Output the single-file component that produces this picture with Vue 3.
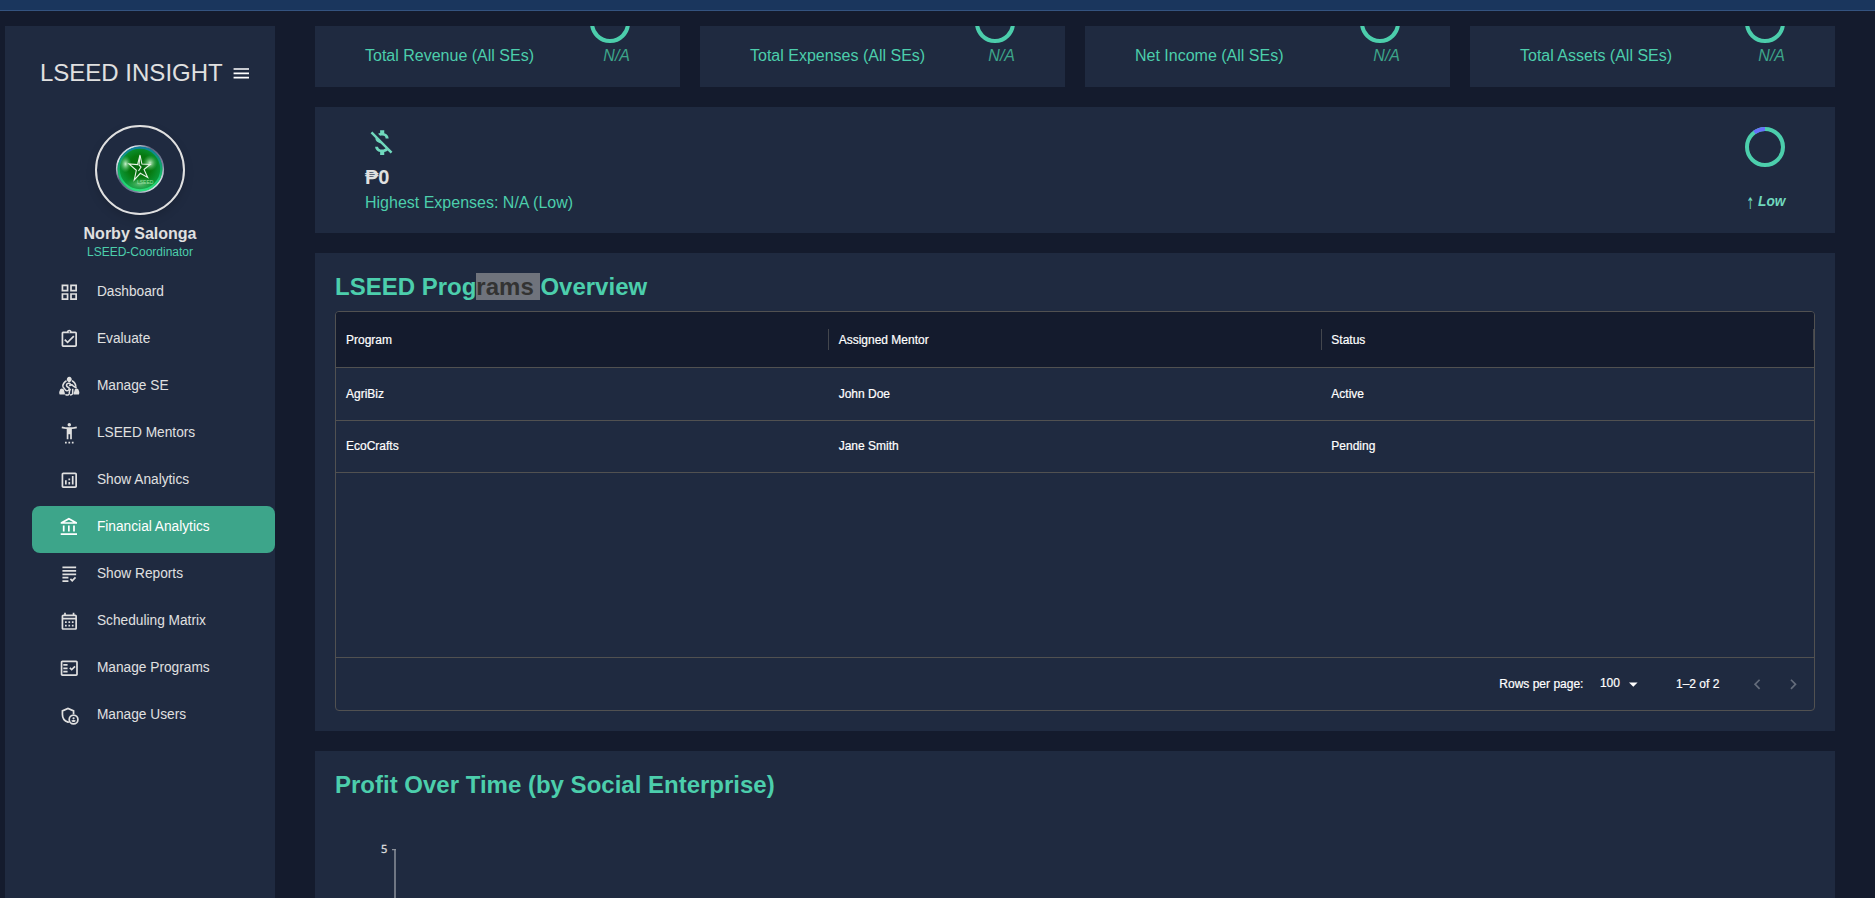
<script setup>
const nav = [
  { label: 'Dashboard', icon: 'M3 3v8h8V3H3zm6 6H5V5h4v4zm-6 4v8h8v-8H3zm6 6H5v-4h4v4zm4-16v8h8V3h-8zm6 6h-4V5h4v4zm-6 4v8h8v-8h-8zm6 6h-4v-4h4v4z' },
  { label: 'Evaluate', icon: 'M18 9l-1.41-1.42L10 14.17l-2.59-2.58L6 13l4 4zm1-6h-4.18C14.4 1.84 13.3 1 12 1c-1.3 0-2.4.84-2.82 2H5c-.14 0-.27.01-.4.04-.39.08-.74.28-1.01.55-.18.18-.33.4-.43.64-.1.23-.16.49-.16.77v14c0 .27.06.54.16.78s.25.45.43.64c.27.27.62.47 1.01.55.13.02.26.03.4.03h14c1.1 0 2-.9 2-2V5c0-1.1-.9-2-2-2zm-7-.25c.41 0 .75.34.75.75s-.34.75-.75.75-.75-.34-.75-.75.34-.75.75-.75zM19 19H5V5h14v14z' },
  { label: 'Manage SE', kind: 'diversity' },
  { label: 'LSEED Mentors', icon: 'M20.5 4c-2.61.7-5.67 1-8.5 1s-5.89-.3-8.5-1L3 6c1.86.5 4 .83 6 1v12h2v-6h2v6h2V7c2-.17 4.14-.5 6-1l-.5-2zM12 4c1.1 0 2-.9 2-2s-.9-2-2-2-2 .9-2 2 .9 2 2 2zM7 24h2v-2H7v2zm4 0h2v-2h-2v2zm4 0h2v-2h-2v2z' },
  { label: 'Show Analytics', icon: 'M19 3H5c-1.1 0-2 .9-2 2v14c0 1.1.9 2 2 2h14c1.1 0 2-.9 2-2V5c0-1.1-.9-2-2-2zm0 16H5V5h14v14zM7 12h2v5H7zM15 7h2v10h-2zM11 14h2v3h-2zM11 10h2v2h-2z' },
  { label: 'Financial Analytics', active: true, icon: 'M6.5 10h-2v7h2v-7zm6 0h-2v7h2v-7zm8.5 9H2v2h19v-2zm-2.5-9h-2v7h2v-7zm-7-6.74L16.71 6H6.29l5.21-2.74m0-2.26L2 6v2h19V6l-9.5-5z' },
  { label: 'Show Reports', icon: 'M4 7h16v2H4V7zm0 6h16v-2H4v2zm0 4h7v-2H4v2zm0 4h7v-2H4v2zm11.41-2.83L14 16.75l-1.41 1.41L15.41 21 20 16.42 18.58 15l-3.17 3.17zM4 3v2h16V3H4z' },
  { label: 'Scheduling Matrix', icon: 'M19 4h-1V2h-2v2H8V2H6v2H5c-1.11 0-1.99.9-1.99 2L3 20c0 1.1.89 2 2 2h14c1.1 0 2-.9 2-2V6c0-1.1-.9-2-2-2zm0 16H5V10h14v10zm0-12H5V6h14v2zM9 14H7v-2h2v2zm4 0h-2v-2h2v2zm4 0h-2v-2h2v2zm-8 4H7v-2h2v2zm4 0h-2v-2h2v2zm4 0h-2v-2h2v2z' },
  { label: 'Manage Programs', icon: 'M20 3H4c-1.1 0-2 .9-2 2v14c0 1.1.9 2 2 2h16c1.1 0 2-.9 2-2V5c0-1.1-.9-2-2-2zm0 16H4V5h16v14zM19.41 10.42 17.99 9l-3.17 3.17-1.41-1.42L12 12.16 14.82 15zM5 7h5v2H5zM5 11h5v2H5zM5 15h5v2H5z' },
  { label: 'Manage Users', kind: 'admin' },
]
const stats = ['Total Revenue (All SEs)', 'Total Expenses (All SEs)', 'Net Income (All SEs)', 'Total Assets (All SEs)']
const columns = ['Program', 'Assigned Mentor', 'Status']
const rows = [
  ['AgriBiz', 'John Doe', 'Active'],
  ['EcoCrafts', 'Jane Smith', 'Pending'],
]
</script>

<template>
  <div class="page">
    <div class="topbar"></div>
    <div class="body">
      <aside class="sidebar">
        <div class="brand">
          <span>LSEED INSIGHT</span>
          <svg class="icon" viewBox="0 0 24 24"><path d="M3 18h18v-2H3v2zm0-5h18v-2H3v2zm0-7v2h18V6H3z" /></svg>
        </div>
        <div class="avatar">
          <svg viewBox="0 0 50 50" width="50" height="50">
            <defs>
              <radialGradient id="ball" cx="50%" cy="45%" r="55%">
                <stop offset="0" stop-color="#05700a" />
                <stop offset="0.45" stop-color="#07780f" />
                <stop offset="0.85" stop-color="#0a9a3a" />
                <stop offset="1" stop-color="#1fd07a" />
              </radialGradient>
              <linearGradient id="rim" x1="0" y1="0" x2="1" y2="1">
                <stop offset="0" stop-color="#4a5270" />
                <stop offset="0.17" stop-color="#e2e6f0" />
                <stop offset="0.4" stop-color="#59617e" />
                <stop offset="0.7" stop-color="#7d84a0" />
                <stop offset="0.85" stop-color="#d5e0e4" />
                <stop offset="1" stop-color="#4a526c" />
              </linearGradient>
              <linearGradient id="edge" x1="0" y1="0" x2="0" y2="1">
                <stop offset="0" stop-color="#0d7f9c" />
                <stop offset="0.5" stop-color="#12ab68" />
                <stop offset="1" stop-color="#2be07c" />
              </linearGradient>
              <radialGradient id="shine">
                <stop offset="0" stop-color="#d4f7d8" stop-opacity="0.95" />
                <stop offset="1" stop-color="#4cc060" stop-opacity="0" />
              </radialGradient>
            </defs>
            <circle cx="25" cy="25" r="23.2" fill="url(#ball)" stroke="url(#rim)" stroke-width="1.8" />
            <circle cx="25" cy="25" r="21.3" fill="none" stroke="url(#edge)" stroke-width="2.2" />
            <ellipse cx="10.5" cy="20" rx="6" ry="8.5" fill="url(#shine)" />
            <ellipse cx="35" cy="19" rx="7.5" ry="8" fill="url(#shine)" />
            <ellipse cx="25" cy="40" rx="15" ry="7" fill="url(#shine)" opacity="0.5" />
            <path d="M25 11l1.9 9 8.3.5-6.2 5 3.7 8-7.4-4.2-6 6.5 2-9.5-7.3-6.3 8.6.6z" fill="#08600f" fill-opacity="0.5" stroke="#e8f3e6" stroke-width="1.1" />
            <path d="M25 12l-1 9 2 2-2.5 4" fill="none" stroke="#e8f3e6" stroke-width="1.1" />
            <text x="22" y="39.5" class="ball-text">LSEED</text>
          </svg>
        </div>
        <div class="name">Norby Salonga</div>
        <div class="role">LSEED-Coordinator</div>
        <nav>
          <a v-for="n in nav" :key="n.label" class="item" :class="{ active: n.active }">
            <svg v-if="n.kind === 'diversity'" class="icon" viewBox="0 0 24 24">
              <path d="M12 1a2.9 2.9 0 0 1 2.7 4c-.5 1.2-1.7 1.8-2.7 2.5-1-.7-2.2-1.3-2.7-2.5A2.9 2.9 0 0 1 12 1z" />
              <path d="M3.5 14.500a3 3 0 0 1 2.600 3.200c.4 1.100.9 2.300.9 3.800H.8C-.5 19 .8 17.800.9 17a2.800 2.800 0 0 1 2.600-2.500z" />
              <path d="M20.500 14.500a3 3 0 0 0-2.600 3.200c-.4 1.100-.9 2.300-.9 3.800h6.200c1.300-2.500 0-3.700-.1-4.500a2.800 2.800 0 0 0-2.600-2.500z" />
              <g class="line thin">
                <path d="M8.800 5.500C6 7 4.500 9.500 4.300 12.500M15.200 5.500c2.800 1.500 4.300 4 4.500 7M7.500 21.500c2 1.500 4.200.7 4.500-1.200.2-2-.2-3.500 1.500-5.300" />
                <path d="M13.500 9.500c-1.300-1.500-3.800-1.500-4.500.2-.6 1.600.2 2.800 1.600 3.400 1.900.8 1.500 2.500.4 3.500-1.200 1-3 .6-3.800-.7L4.500 12.500M12 11.500c1.500-1.500 3.500-1.500 4.500 0l4 2.500M16 15v5.500c-.5 1.200-1.500 1.700-3 1.500" />
              </g>
            </svg>
            <svg v-else-if="n.kind === 'admin'" class="icon" viewBox="0 0 24 24">
              <path class="line" d="M17 10.500V6.900L10.500 4.100 4 6.900v4.300c0 4 2.700 7.700 6.500 8.800l1-.3" />
              <circle class="line" cx="17" cy="17" r="5.1" />
              <circle cx="17" cy="15.5" r="1.3" />
              <path d="M14.300 18.500c.8-1.300 4.600-1.300 5.400 0-1.300 1.900-4.100 1.900-5.400 0z" />
            </svg>
            <svg v-else class="icon" viewBox="0 0 24 24"><path :d="n.icon" /></svg>
            <span>{{ n.label }}</span>
          </a>
        </nav>
      </aside>

      <main>
        <section class="stats">
          <div v-for="s in stats" :key="s" class="stat">
            <span class="label">{{ s }}</span>
            <div class="gauge">
              <svg class="ring" width="40" height="40" viewBox="0 0 40 40"><circle cx="20" cy="20" r="18" /></svg>
              <em>N/A</em>
            </div>
          </div>
        </section>

        <section class="card highest">
          <div>
            <svg class="money" viewBox="0 0 24 24"><path d="M12.5 6.9c1.78 0 2.44.85 2.5 2.1h2.21c-.07-1.72-1.12-3.3-3.21-3.81V3h-3v2.16c-.53.12-1.03.3-1.48.54l1.47 1.47c.41-.17.91-.27 1.51-.27zM5.33 4.06 4.06 5.33 7.5 8.77c0 2.08 1.56 3.21 3.91 3.91l3.51 3.51c-.34.48-1.05.91-2.42.91-2.06 0-2.87-.92-2.98-2.1h-2.2c.12 2.19 1.76 3.42 3.68 3.83V21h3v-2.15c.96-.18 1.82-.55 2.45-1.12l2.22 2.22 1.27-1.27L5.33 4.06z" /></svg>
            <div class="amount">₱0</div>
            <div class="label">Highest Expenses: N/A (Low)</div>
          </div>
          <div class="level">
            <svg class="ring" width="40" height="40" viewBox="0 0 40 40">
              <circle cx="20" cy="20" r="18" />
              <path d="M9.42 5.44A18 18 0 0 1 20 2" />
            </svg>
            <div class="low"><span class="arrow">↑</span><b>Low</b></div>
          </div>
        </section>

        <section class="card programs">
          <h2>LSEED Prog<span class="selected">rams </span>Overview</h2>
          <div class="table">
            <div class="row head">
              <div v-for="c in columns" :key="c" class="cell">{{ c }}<i></i></div>
            </div>
            <div v-for="r in rows" :key="r[0]" class="row">
              <div v-for="c in r" :key="c" class="cell">{{ c }}</div>
            </div>
            <div class="space"></div>
            <div class="foot">
              <span class="rpp">Rows per page:</span>
              <span class="num">100</span>
              <svg class="icon caret" viewBox="0 0 24 24"><path d="M7 10l5 5 5-5z" /></svg>
              <span class="range">1–2 of 2</span>
              <svg class="icon chev prev" viewBox="0 0 24 24"><path d="M15.41 16.59L10.83 12l4.58-4.59L14 6l-6 6 6 6z" /></svg>
              <svg class="icon chev" viewBox="0 0 24 24"><path d="M8.59 16.59L13.17 12 8.59 7.41 10 6l6 6-6 6z" /></svg>
            </div>
          </div>
        </section>

        <section class="card profit">
          <h2>Profit Over Time (by Social Enterprise)</h2>
          <div class="chart">
            <span>5</span>
            <svg width="4" height="60" viewBox="0 0 4 60"><path d="M0 .5h4M3 0v60" /></svg>
          </div>
        </section>
      </main>
    </div>
  </div>
</template>

<style>
body { background: #141b2d; }
</style>

<style scoped>
* { box-sizing: border-box; }
.page {
  height: 898px;
  overflow: hidden;
  background: #141b2d;
  color: #e0e0e0;
  font-family: "Liberation Sans", Arial, sans-serif;
}
.topbar { height: 11px; background: #1a365d; border-bottom: 1px solid #34537f; }
.body { display: flex; gap: 40px; height: 872px; margin: 15px 40px 0 5px; }
.sidebar { width: 270px; flex: none; background: #1f2a40; }
.icon { width: 20.57px; height: 20.57px; fill: currentColor; flex: none; display: block; }
.brand { display: flex; align-items: center; padding: 33px 0 0 35px; height: 61px; font-size: 24px; line-height: 28px; }
.brand .icon { margin-left: 8px; color: #fff; }
.brand span { white-space: nowrap; }
.avatar {
  width: 90px; height: 90px; margin: 38px auto 0;
  border: 2px solid #e0e0e0; border-radius: 50%;
  display: flex; align-items: center; justify-content: center;
  padding-bottom: 2px;
  box-shadow: 0 4px 10px rgba(0, 0, 0, .15);
}
.ball-text { font-size: 5px; fill: #9fe0a5; }
.name { margin-top: 9px; text-align: center; font-size: 16px; font-weight: 700; line-height: 20px; }
.role { margin-top: 0; text-align: center; font-size: 12px; line-height: 16px; color: #4cceac; }
nav { padding: 11px 0 0 27px; }
.item { display: flex; height: 47px; padding: 11px 0 0 27px; font-size: 13.71px; line-height: 18px; }
.item span { margin: 1px 0 0 17.4px; white-space: nowrap; }
.active { background: #3da58a; border-radius: 8px; color: #fff; }
.line { fill: none; stroke: currentColor; stroke-width: 2; }
.thin { stroke-width: 1.8; }

main { flex: 1; min-width: 0; overflow: hidden; display: flex; flex-direction: column; gap: 20px; }
.card, .stat { background: #1f2a40; flex: none; }
.stats { display: grid; grid-template-columns: repeat(4, 1fr); gap: 20px; height: 61px; flex: none; }
.stat { display: flex; justify-content: space-between; overflow: hidden; padding: 0 50px; }
.label { color: #4cceac; font-size: 16px; line-height: 20px; }
.stat .label { margin-top: 20px; }
.gauge { margin-top: -23px; display: flex; flex-direction: column; align-items: flex-end; }
.gauge em { margin-top: 3px; font-size: 16px; line-height: 20px; color: #3da58a; }
.ring { display: block; fill: none; stroke: #4cceac; stroke-width: 4; }
.ring path { stroke: #6870fa; }

.highest { height: 126px; display: flex; justify-content: space-between; padding: 19px 50px 0; }
.money { display: block; width: 33px; height: 33px; fill: #70d8bd; }
.amount { margin-top: 6px; font-size: 20px; line-height: 24px; font-weight: 700; }
.highest .label { margin-top: 4px; }
.level { display: flex; flex-direction: column; align-items: flex-end; padding-top: 1px; }
.low { display: flex; margin: 25px -0.5px 0 0; color: #70d8bd; font-size: 13.71px; line-height: 20px; font-style: italic; }
.arrow { margin: 2px 4px 0 0; font-family: "DejaVu Sans", sans-serif; font-size: 16px; font-style: normal; transform: scaleX(.6); transform-origin: right; }

h2 { margin: 0; color: #4cceac; font-size: 24px; line-height: 28px; font-weight: 700; white-space: pre; }
.selected { background: #6f737c; color: #333; }
.programs { height: 478px; padding: 20px 20px 0; }
.table { margin-top: 10px; height: 400px; border: 1px solid #515151; border-radius: 4px; overflow: hidden; font-size: 12px; color: #fff; display: flex; flex-direction: column; -webkit-text-stroke: .2px; }
.row { display: grid; grid-template-columns: repeat(3, 1fr); height: 52px; line-height: 51px; border-bottom: 1px solid #515151; }
.row:not(.head):nth-child(2) { height: 53px; line-height: 52px; }
.head { height: 56px; line-height: 54px; background: #141b2d; }
.cell { display: flex; align-items: center; padding-left: 10px; }
.head .cell { justify-content: space-between; }
.cell i { width: 1px; height: 21px; margin-right: -0.4px; background: #43464d; }
.space { flex: 1; }
.foot { height: 53px; border-top: 1px solid #515151; display: flex; align-items: center; padding-right: 10px; justify-content: flex-end; }
.num { margin: -2px 0 0 16.5px; }
.caret { margin-left: 3.5px; }
.range { margin-left: 32px; }
.chev { color: #646c7b; }
.prev { margin: 0 15.5px 0 28px; }

.profit { height: 160px; padding: 20px 20px 0; }
.chart { display: flex; margin: 50px 0 0 46px; font-family: "Open Sans", sans-serif; font-size: 11px; line-height: 12px; }
.chart span { margin: -6px 5px 0 0; -webkit-text-stroke: .3px; }
.chart svg { fill: none; stroke: #8b9099; }
.chart path { stroke-width: 1.5; }
</style>
